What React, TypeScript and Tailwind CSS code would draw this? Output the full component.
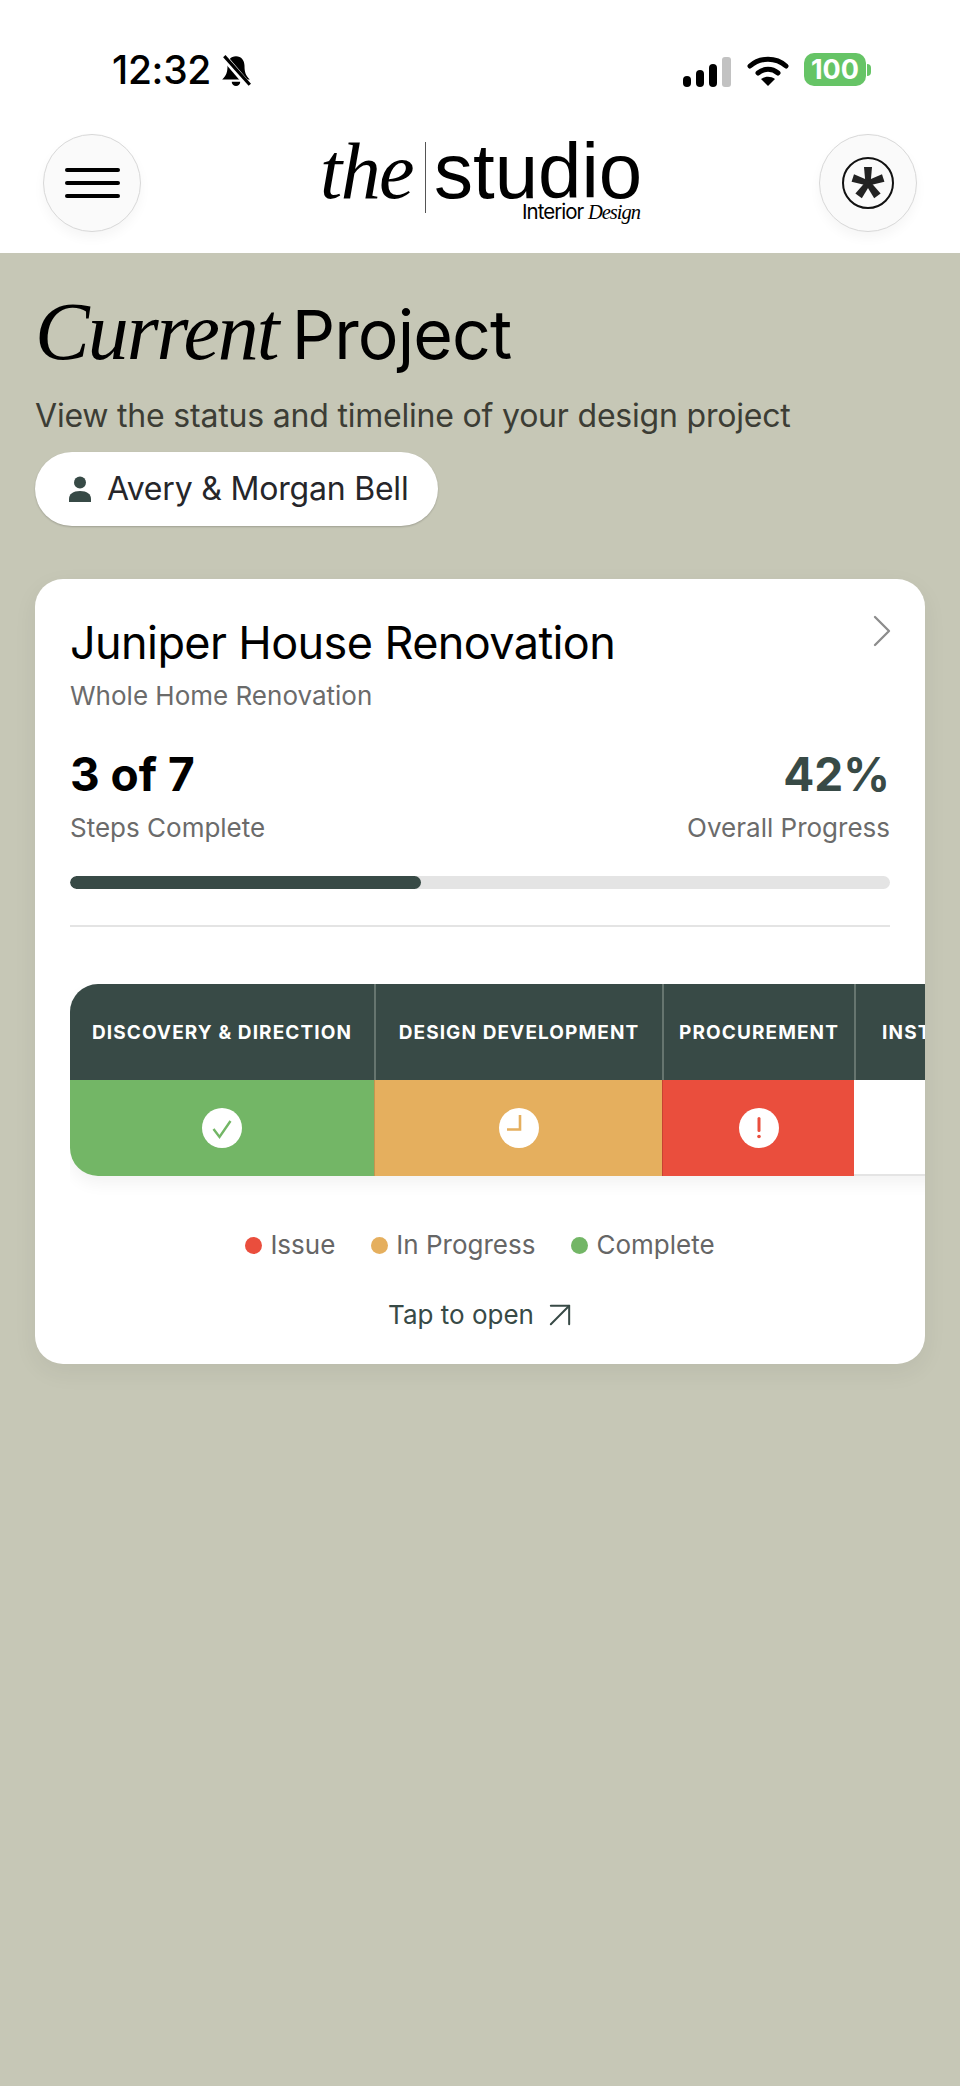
import { ChevronRight, ArrowUpRight } from 'lucide-react';

const steps = [
  { label: 'DISCOVERY & DIRECTION', width: 'w-[304px]', cell: 'bg-[#73b666]', status: 'complete' },
  { label: 'DESIGN DEVELOPMENT', width: 'w-[288px]', cell: 'bg-[#e5af5e]', status: 'progress' },
  { label: 'PROCUREMENT', width: 'w-[192px]', cell: 'bg-[#ea4e3d]', status: 'issue' },
  { label: 'INSTALLATION', width: 'w-[206px]', cell: 'bg-white border-b-2 border-[#e4e4e4]', status: 'none' },
];

function StatusIcon({ status }: { status: string }) {
  if (status === 'none') return null;
  return (
    <div className="w-10 h-10 rounded-full bg-white">
      <svg width="40" height="40" viewBox="0 0 40 40" fill="none">
        {status === 'complete' && <path d="M11.5 21L17.5 29L28.5 13" stroke="#73b666" strokeWidth="2.4" />}
        {status === 'progress' && <path d="M21 7V21.5H8" stroke="#e5af5e" strokeWidth="2.6" />}
        {status === 'issue' && (
          <>
            <rect x="18.5" y="9" width="3" height="15" rx="1.5" fill="#ea4e3d" />
            <circle cx="20" cy="28.5" r="1.8" fill="#ea4e3d" />
          </>
        )}
      </svg>
    </div>
  );
}

function LegendItem({ color, label }: { color: string; label: string }) {
  return (
    <div className="flex items-center gap-2">
      <span className={`w-[17px] h-[17px] rounded-full ${color}`} />
      <span>{label}</span>
    </div>
  );
}

export default function App() {
  return (
    <div className="w-[960px] h-[2086px] bg-[#c6c7b6] overflow-hidden font-['Inter',sans-serif]">
      <header className="bg-white h-[253px]">
        {/* status bar */}
        <div className="h-[134px] flex justify-between pl-[112px] pr-[89px] pt-[47px]">
          <div className="flex items-start gap-[8px] h-[46px]">
            <span className="text-[39px] leading-[46px] font-medium text-black tracking-[-0.3px]">12:32</span>
            <svg className="mt-[7px]" width="34" height="34" viewBox="0 0 32 32">
              <path d="M16 2c-5 0-8 4-8 9 0 6-1 9-5 13h26c-4-4-5-7-5-13 0-5-3-9-8-9z" fill="#000" />
              <path d="M12 26h8a4 4 0 0 1-8 0z" fill="#000" />
              <path d="M4 2l24 28" stroke="#fff" strokeWidth="6" />
              <path d="M5 2l24 27" stroke="#000" strokeWidth="3" />
            </svg>
          </div>
          <div className="flex items-start gap-[16px] pt-[8px]">
            <svg className="mt-[1px]" width="48" height="31" viewBox="0 0 48 31">
              <rect x="0" y="20" width="8" height="11" rx="4" fill="#000" />
              <rect x="13" y="14" width="8" height="17" rx="4" fill="#000" />
              <rect x="26" y="8" width="8" height="23" rx="4" fill="#000" />
              <rect x="39" y="1" width="9" height="30" rx="3" fill="#c2c2c2" />
            </svg>
            <svg width="42" height="32" viewBox="0 0 42 32" fill="none" stroke="#000" strokeLinecap="round">
              <path d="M3 11c10-9 26-9 36 0" strokeWidth="5" />
              <path d="M11 18c6-5 14-5 20 0" strokeWidth="5" />
              <path d="M21 31l-7-7c4-3 10-3 14 0z" fill="#000" stroke="none" />
            </svg>
            <div className="flex items-center -mt-[2px] ml-[-1px]">
              <div className="w-[62px] h-[33px] rounded-[10px] bg-[#66c466] text-white font-bold text-[27px] leading-[33px] text-center">
                100
              </div>
              <div className="w-[4px] h-[12px] ml-[1px] rounded-r-full bg-[#66c466]" />
            </div>
          </div>
        </div>
        {/* nav */}
        <div className="flex justify-between items-start px-[43px]">
          <button className="w-[98px] h-[98px] rounded-full border border-[#d8d8d8] bg-[#fafafa] shadow-[0_6px_12px_rgba(0,0,0,0.04)] flex flex-col items-center justify-center gap-[9px]">
            <span className="block w-[55px] h-[4px] rounded-full bg-black" />
            <span className="block w-[55px] h-[4px] rounded-full bg-black" />
            <span className="block w-[55px] h-[4px] rounded-full bg-black" />
          </button>
          <div className="relative w-[330px] h-[98px] ml-[2px] text-black">
            <span className="absolute left-[4px] top-[9px] font-['Liberation_Serif',serif] italic text-[80px] leading-[56px] tracking-[-1.6px]">the</span>
            <span className="absolute left-[109px] top-[8px] w-px h-[71px] bg-[#555]" />
            <span className="absolute left-[118px] top-[9px] font-['Liberation_Sans',sans-serif] text-[78px] leading-[56px]">studio</span>
            <span className="absolute right-[6px] top-[66px] text-[20.5px] leading-[24px] tracking-[-1px] whitespace-nowrap">
              Interior <span className="font-['Liberation_Serif',serif] italic">Design</span>
            </span>
          </div>
          <button className="w-[98px] h-[98px] rounded-full border border-[#d8d8d8] bg-[#fafafa] shadow-[0_6px_12px_rgba(0,0,0,0.04)] flex items-center justify-center">
            <svg width="54" height="54" viewBox="0 0 54 54">
              <circle cx="27" cy="27" r="25" fill="none" stroke="#111" strokeWidth="2" />
              <g fill="#222">
                <polygon points="23,11 31,11 29.5,28 24.5,28" />
                <polygon points="23,11 31,11 29.5,28 24.5,28" transform="rotate(72 27 27)" />
                <polygon points="23,11 31,11 29.5,28 24.5,28" transform="rotate(144 27 27)" />
                <polygon points="23,11 31,11 29.5,28 24.5,28" transform="rotate(216 27 27)" />
                <polygon points="23,11 31,11 29.5,28 24.5,28" transform="rotate(288 27 27)" />
              </g>
            </svg>
          </button>
        </div>
      </header>

      <main className="px-[35px] pt-[38px]">
        <h1 className="text-[68px] leading-[82px] text-black tracking-[-0.9px] flex items-baseline gap-[14px]">
          <span className="font-['Liberation_Serif',serif] italic text-[82px] tracking-[-2px]">Current</span>
          <span>Project</span>
        </h1>
        <p className="mt-[21px] text-[32px] leading-[40px] text-[#3c3d35] tracking-[-0.2px]">
          View the status and timeline of your design project
        </p>
        <div className="mt-[16px] w-[403px] h-[74px] rounded-[37px] bg-white shadow-[0_1px_2px_rgba(0,0,0,0.2)] flex items-center pl-[33px] gap-[15px]">
          <svg width="24" height="26" viewBox="0 0 24 26" fill="#374a46">
            <circle cx="12" cy="6.5" r="6" />
            <path d="M1 26v-3c0-5 4-8 11-8s11 3 11 8v3z" />
          </svg>
          <span className="text-[32px] text-[#26262a] tracking-[-0.2px]">Avery & Morgan Bell</span>
        </div>

        <section className="mt-[53px] h-[785px] w-[890px] rounded-[28px] bg-white shadow-[0_8px_24px_rgba(0,0,0,0.06)] pt-[36px] overflow-hidden">
          <div className="px-[35px]">
            <div className="flex justify-between items-start">
              <h2 className="text-[45px] leading-[56px] text-black tracking-[-0.6px]">Juniper House Renovation</h2>
              <ChevronRight className="w-[56px] h-[56px] -mr-[20px] -mt-[12px] -mb-[10px] text-[#8d8d8d]" strokeWidth={1} />
            </div>
            <p className="mt-[8px] text-[26px] leading-[34px] text-[#6b6b6b]">Whole Home Renovation</p>

            <div className="mt-[33px] flex justify-between items-start">
              <div>
                <div className="text-[46px] leading-[56px] font-bold text-black">3 of 7</div>
                <div className="mt-[9px] text-[26px] leading-[34px] text-[#6b6b6b]">Steps Complete</div>
              </div>
              <div className="text-right">
                <div className="text-[46px] leading-[56px] font-bold text-[#384a46]">42%</div>
                <div className="mt-[9px] text-[26px] leading-[34px] text-[#6b6b6b]">Overall Progress</div>
              </div>
            </div>

            <div className="mt-[31px] h-[13px] rounded-full bg-[#e4e4e4] overflow-hidden">
              <div className="h-full w-[351px] rounded-full bg-[#384a46]" />
            </div>
            <div className="mt-[36px] h-[2px] bg-[#e4e4e4]" />
          </div>

          {/* step table runs off the right edge of the card */}
          <div className="mt-[57px] ml-[35px] w-[855px] overflow-hidden pb-[20px] -mb-[20px]">
            <div className="flex w-max rounded-l-[28px] overflow-hidden shadow-[0_8px_16px_rgba(0,0,0,0.05)]">
              {steps.map((step, i) => (
                <div key={step.label} className={`${step.width} shrink-0`}>
                  <div className={`h-[96px] pt-[2px] bg-[#384a46] flex items-center justify-center text-white font-bold text-[19px] tracking-[1.1px] whitespace-nowrap overflow-hidden ${i > 0 ? 'border-l-2 border-[#66756f]' : ''}`}>
                    {step.label}
                  </div>
                  <div className={`h-[96px] ${step.cell} flex items-center justify-center ${i > 0 && i < 3 ? 'border-l border-black/15' : ''}`}>
                    <StatusIcon status={step.status} />
                  </div>
                </div>
              ))}
            </div>
          </div>

          <div className="mt-[52px] flex justify-center gap-[36px] text-[26px] leading-[34px] text-[#666666]">
            <LegendItem color="bg-[#ea4e3d]" label="Issue" />
            <LegendItem color="bg-[#e5af5e]" label="In Progress" />
            <LegendItem color="bg-[#73b666]" label="Complete" />
          </div>

          <div className="mt-[36px] pl-[10px] flex justify-center items-center gap-[4px] text-[26px] leading-[34px] text-[#384a46]">
            <span>Tap to open</span>
            <ArrowUpRight className="w-[44px] h-[44px] -my-[5px]" strokeWidth={1.1} />
          </div>
        </section>
      </main>
    </div>
  );
}
